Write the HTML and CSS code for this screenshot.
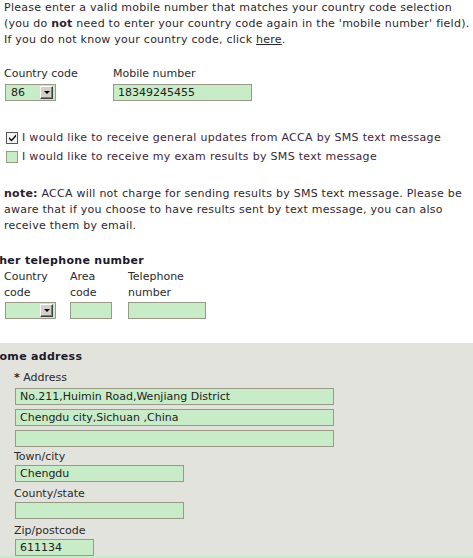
FILE: index.html
```html
<!DOCTYPE html>
<html lang="en">
<head>
  <meta charset="UTF-8">
  <title>Contact details</title>
  <link rel="stylesheet" href="styles.css">
</head>
<body>
  <div class="page">
    <p class="intro">Please enter a valid mobile number that matches your country code selection<br>(you do <b>not</b> need to enter your country code again in the 'mobile number' field).<br>If you do not know your country code, click <a href="#">here</a>.</p>

    <!-- Mobile -->
    <div class="row mobile-row">
      <div class="field cc">
        <label>Country code</label>
        <div class="select sel-cc"><span>86</span><span class="arrow"></span></div>
      </div>
      <div class="field">
        <label>Mobile number</label>
        <input type="text" class="txt w-mobile" value="18349245455">
      </div>
    </div>

    <div class="checks">
      <div class="check"><span class="box on"><svg width="9" height="9" viewBox="0 0 9 9"><path d="M1 4 L3.5 6.5 L8 1.5 L8 3.5 L3.5 8.5 L1 6 Z" fill="#000"/></svg></span>I would like to receive general updates from ACCA by SMS text message</div>
      <div class="check"><span class="box"></span>I would like to receive my exam results by SMS text message</div>
    </div>

    <p class="note"><b>note:</b> ACCA will not charge for sending results by SMS text message. Please be<br>aware that if you choose to have results sent by text message, you can also<br>receive them by email.</p>

    <!-- Other telephone -->
    <h3 class="title title-other">Other telephone number</h3>
    <div class="row phone-row">
      <div class="field f-country">
        <label>Country<br>code</label>
        <div class="select sel-empty"><span></span><span class="arrow"></span></div>
      </div>
      <div class="field f-area">
        <label>Area<br>code</label>
        <input type="text" class="txt w-area">
      </div>
      <div class="field">
        <label>Telephone<br>number</label>
        <input type="text" class="txt w-tel">
      </div>
    </div>
  </div>

  <!-- Home address -->
  <div class="address">
    <h3 class="title title-home">Home address</h3>
    <div class="addr-fields">
      <label class="first"><span class="req">*</span> Address</label>
      <input type="text" class="txt w-addr" value="No.211,Huimin Road,Wenjiang District">
      <input type="text" class="txt w-addr" value="Chengdu city,Sichuan ,China">
      <input type="text" class="txt w-addr last" value="">
      <label>Town/city</label>
      <input type="text" class="txt w-town" value="Chengdu">
      <label>County/state</label>
      <input type="text" class="txt w-town" value="">
      <label>Zip/postcode</label>
      <input type="text" class="txt w-zip" value="611134">
    </div>
  </div>
  <div class="next"></div>
</body>
</html>
```

FILE: styles.css
```css
/* General */
body {
  margin: 0;
  font-family: "DejaVu Sans", Verdana, sans-serif;
  font-size: 11px;
  line-height: 16px;
  color: #333;
  background: #fff;
  overflow: hidden;
}

.page {
  padding: 0 4px;
}

p {
  margin: 0;
  white-space: nowrap;
}

.intro, .note {
  color: #2e1f2e;
  letter-spacing: 0.25px;
}

.intro a {
  color: #2e1f2e;
}

label {
  display: block;
  color: #2a2a2a;
}

/* Inputs */
.txt {
  display: block;
  box-sizing: border-box;
  height: 17px;
  margin: 0;
  padding: 0 4px;
  border: 1px solid #999988;
  background: #c8ecc8;
  font-family: inherit;
  font-size: 11px;
  color: #222;
  outline: none;
}

.w-mobile { width: 139px; }
.w-area { width: 42px; }
.w-tel { width: 78px; }
.w-addr { width: 319px; margin-bottom: 4px; }
.w-town { width: 169px; }
.w-zip { width: 79px; }

.select {
  position: relative;
  box-sizing: border-box;
  width: 51px;
  height: 17px;
  margin-left: 1px;
  padding-left: 5px;
  border: 1px solid #999988;
  background: #c8ecc8;
  color: #222;
  line-height: 15px;
}

.select .arrow {
  position: absolute;
  top: 1px;
  right: 2px;
  width: 13px;
  height: 13px;
  box-sizing: border-box;
  background: #d4d0c8;
  border: 1px solid;
  border-color: #fff #404040 #404040 #fff;
  box-shadow: inset -1px -1px 0 #808080;
}

.select .arrow::after {
  content: "";
  position: absolute;
  left: 3px;
  top: 4px;
  border-left: 3px solid transparent;
  border-right: 3px solid transparent;
  border-top: 3px solid #000;
}

/* Rows */
.row {
  display: flex;
}

.mobile-row {
  margin-top: 18px;
}

.mobile-row label {
  margin-bottom: 2px;
}

.field.cc { width: 109px; }
.f-country { width: 66px; }
.f-area { width: 58px; }

.phone-row label {
  margin-bottom: 1px;
}

/* Checkboxes */
.checks {
  margin-top: 27px;
  padding-left: 2px;
}

.check {
  display: flex;
  align-items: center;
  height: 19px;
  color: #3d1f3d;
  letter-spacing: 0.3px;
}

.box {
  display: inline-flex;
  align-items: center;
  justify-content: center;
  box-sizing: border-box;
  width: 12px;
  height: 12px;
  margin-right: 4px;
  border: 1px solid #999988;
  background: #c8ecc8;
}

.box.on {
  border-color: #555;
  background: #f2f2f2;
}

.note {
  margin-top: 20px;
}

/* Section titles */
.title {
  margin: 0;
  font-size: 11px;
  line-height: 16px;
  font-weight: bold;
  letter-spacing: 0.3px;
  color: #1a1a2a;
}

.title-other {
  margin-top: 19px;
  margin-left: -20px;
}

/* Home address */
.address {
  margin-top: 24px;
  padding: 6px 0 0;
  background: #e3e3dd;
}

.title-home {
  margin-left: -10px;
}

.addr-fields {
  padding: 5px 0 0 14px;
}

.addr-fields .first {
  margin-bottom: 2px;
}

.addr-fields .txt {
  margin-left: 1px;
}

.addr-fields .w-addr.last {
  margin-bottom: 2px;
}

.addr-fields .w-town {
  margin-bottom: 4px;
}

.req {
  font-weight: bold;
}

.next {
  height: 6px;
  background: #c8ecc8;
}
```
